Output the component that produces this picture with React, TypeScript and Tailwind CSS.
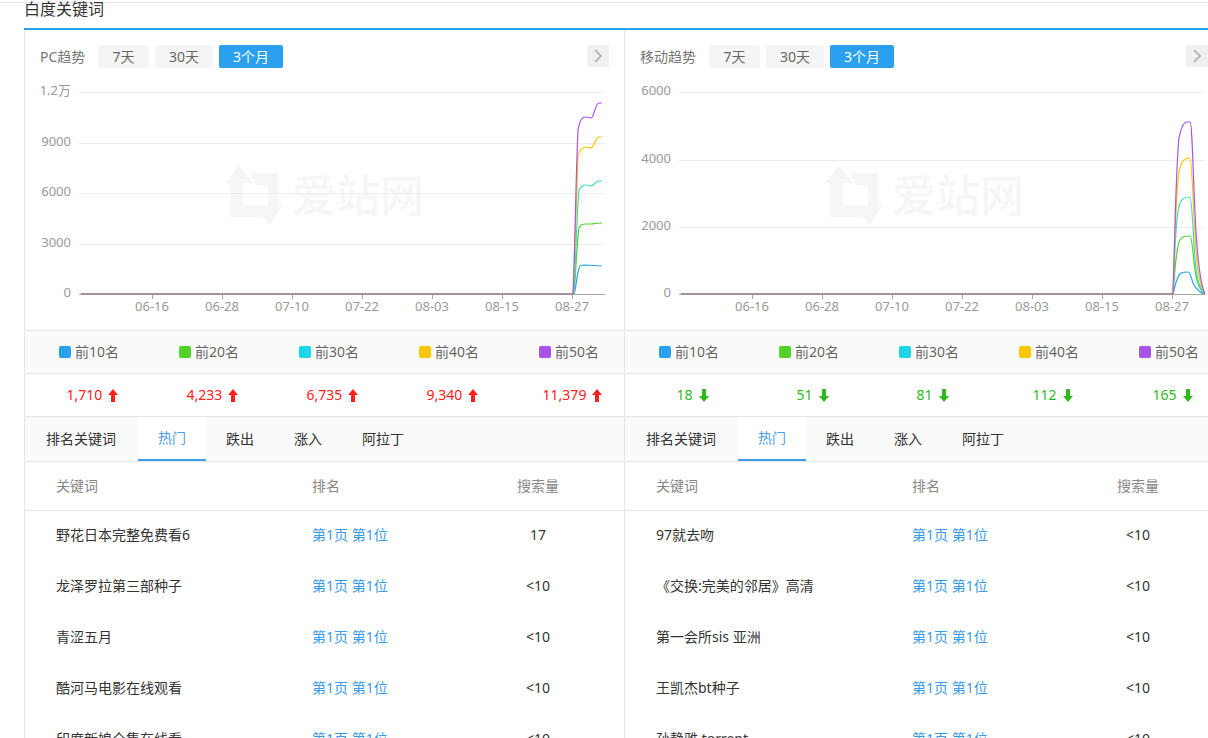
const legendColors = ["#2ba0ec", "#52d12c", "#1fd6e8", "#fcc600", "#a953e8"];
const lineColors = ["#2ba0ec", "#52d12c", "#36dccb", "#fcc600", "#a953e8"];
const ticks = [
  { x: 152, label: "06-16" },
  { x: 222, label: "06-28" },
  { x: 292, label: "07-10" },
  { x: 362, label: "07-22" },
  { x: 432, label: "08-03" },
  { x: 502, label: "08-15" },
  { x: 572, label: "08-27" },
];
const tabs = ["排名关键词", "热门", "跌出", "涨入", "阿拉丁"];

const pcLines = [
  "M81 294 L574 294 C576 290 577 270 580 266 C581 265 583 265 586 265 L602 266",
  "M81 294 L574 294 C576 270 577 240 579 228 C581 224 583 224 586 224 L591 224 C594 224 595 223 602 223",
  "M81 294 L574 294 C576 250 577 210 579 190 C581 186 583 185 586 185 C589 185 590 186 591 186 C594 186 595 181 599 181 L602 181",
  "M81 294 L573 294 C575 250 577 190 578 155 C580 150 583 147 586 147 C589 147 590 148 591 148 C594 148 595 137 599 137 L602 137",
  "M81 294 L573 294 C575 250 576 170 578 130 C580 118 583 117 586 117 C589 117 590 118 591 118 C594 118 595 103 599 103 L602 103",
];
const mobileLines = [
  "M81 294 L573 294 C575 288 576 276 581 273 C583 272 586 272 588 272 C591 272 591 280 594 285 C597 291 600 291 603 294",
  "M81 294 L573 294 C575 270 576 246 580 240 C582 236 585 236 590 236 C592 236 593 255 595 270 C597 285 600 289 604 294",
  "M81 294 L573 294 C575 250 576 212 580 203 C582 198 585 197 590 197 C592 197 593 235 595 258 C597 282 600 288 604 294",
  "M81 294 L573 294 C575 240 576 180 580 168 C582 160 585 158 590 158 C592 158 593 210 596 250 C598 278 601 287 605 294",
  "M81 294 L573 294 C575 230 576 165 579 138 C581 128 584 122 587 122 L590 122 C592 122 593 170 595 213 C597 255 600 284 605 294",
];

const pcRows = [
  ["野花日本完整免费看6", "17"],
  ["龙泽罗拉第三部种子", "<10"],
  ["青涩五月", "<10"],
  ["酷河马电影在线观看", "<10"],
  ["印度新娘全集在线看", "<10"],
];
const mobileRows = [
  ["97就去吻", "<10"],
  ["《交换:完美的邻居》高清", "<10"],
  ["第一会所sis 亚洲", "<10"],
  ["王凯杰bt种子", "<10"],
  ["孙静雅 torrent", "<10"],
];

function Chart({ yLabels, ys, lines }: { yLabels: string[]; ys: number[]; lines: string[] }) {
  return (
    <svg width="599" height="262" viewBox="25 68 599 262" className="block overflow-visible">
      {/* 水印 */}
      <path d="M239 165 L253 183 L243 183 L243 205 L258 205 L262 217 L230 217 L230 183 L225 183 Z" fill="#f6f6f6" />
      <path d="M251 173 L278 173 L278 206 L283 206 L269 225 L255 206 L268 206 L268 185 L255 185 Z" fill="#f6f6f6" />
      <text x="292" y="212" fontSize="44" fill="#f6f6f6" fontWeight="500">
        爱站网
      </text>
      {ys.slice(0, -1).map((y) => (
        <line key={y} x1="79" x2="605" y1={y + 0.5} y2={y + 0.5} stroke="#ececec" />
      ))}
      <line x1="79" x2="605" y1="294.5" y2="294.5" stroke="#a8a8a8" />
      {ticks.map((t) => (
        <g key={t.x}>
          <line x1={t.x + 0.5} x2={t.x + 0.5} y1="294" y2="299" stroke="#a8a8a8" />
          <text x={t.x} y="311" fontSize="13" fill="#999" textAnchor="middle">
            {t.label}
          </text>
        </g>
      ))}
      {yLabels.map((l, i) => (
        <text key={l} x="71" y={ys[i] + 3} fontSize="13" fill="#999" textAnchor="end">
          {l}
        </text>
      ))}
      {lines.map((d, i) => (
        <path key={i} d={d} fill="none" stroke={lineColors[i]} strokeWidth="1.2" />
      ))}
    </svg>
  );
}

function Arrow({ up, color }: { up: boolean; color: string }) {
  return (
    <svg width="10" height="13" viewBox="0 0 10 13" className="ml-1.5 shrink-0">
      <path
        d={up ? "M5 0 L10 6 L7 6 L7 13 L3 13 L3 6 L0 6 Z" : "M3 0 L7 0 L7 7 L10 7 L5 13 L0 7 L3 7 Z"}
        fill={color}
      />
    </svg>
  );
}

function Panel({
  label,
  labelClass,
  barClass,
  yLabels,
  ys,
  lines,
  values,
  up,
  rows,
}: {
  label: string;
  labelClass: string;
  barClass: string;
  yLabels: string[];
  ys: number[];
  lines: string[];
  values: string[];
  up: boolean;
  rows: string[][];
}) {
  const valueColor = up ? "#ff2020" : "#2fb81c";
  return (
    <div className="w-[600px] shrink-0 border-l border-[#e5e5e5]">
      <div className={barClass}>
        <span className={labelClass}>{label}</span>
        <button className="h-[23px] w-[51px] rounded-[2px] bg-[#f5f5f5] text-[#666] leading-[23px]">7天</button>
        <button className="ml-1.5 h-[23px] w-[58px] rounded-[2px] bg-[#f5f5f5] text-[#666] leading-[23px]">30天</button>
        <button className="ml-1.5 h-[23px] w-[64px] rounded-[2px] bg-[#2ba0ec] text-white leading-[23px]">3个月</button>
        <div className="ml-auto flex h-[22px] w-[22px] items-center justify-center bg-[#f0f0f0]">
          <svg width="10" height="14" viewBox="0 0 10 14">
            <path d="M2 1 L8 7 L2 13" fill="none" stroke="#aaa" strokeWidth="1.5" />
          </svg>
        </div>
      </div>
      <Chart yLabels={yLabels} ys={ys} lines={lines} />
      <div className="grid h-[44px] grid-cols-[repeat(5,120px)] border-y border-[#e5e5e5] bg-[#fafafa]">
        {legendColors.map((c, i) => (
          <div key={c} className="flex items-center pl-[34px] text-[#666]">
            <span className="h-3 w-3 shrink-0 rounded-[2px]" style={{ backgroundColor: c }} />
            <span className="ml-1 whitespace-nowrap">前{(i + 1) * 10}名</span>
          </div>
        ))}
      </div>
      <div className="grid h-[43px] grid-cols-[repeat(5,120px)] border-b border-[#e5e5e5]">
        {values.map((v) => (
          <div key={v} className="flex items-center justify-center pl-[15px]" style={{ color: valueColor }}>
            {v}
            <Arrow up={up} color={valueColor} />
          </div>
        ))}
      </div>
      <div className="flex h-[45px] border-b border-[#e5e5e5] bg-[#fafafa] pl-[1px]">
        {tabs.map((t, i) => (
          <div
            key={t}
            className={
              i === 1
                ? "flex h-[44px] items-center border-b-2 border-[#3f9fe8] bg-white px-5 text-[#4a9fe8]"
                : i === 0
                  ? "flex h-[44px] items-center pl-5 pr-[22px] text-[#333]"
                  : "flex h-[44px] items-center px-5 text-[#333]"
            }
          >
            {t}
          </div>
        ))}
      </div>
      <div className="grid h-[49px] grid-cols-[287px_176px_100px] items-center border-b border-[#e5e5e5] text-[#888]">
        <div className="pl-[31px]">关键词</div>
        <div>排名</div>
        <div className="text-center">搜索量</div>
      </div>
      {rows.map((r) => (
        <div key={r[0]} className="grid h-[51px] grid-cols-[287px_176px_100px] items-center pb-1 text-[#333]">
          <div className="pl-[31px] whitespace-nowrap">{r[0]}</div>
          <div className="text-[#3a9be8]">第1页 第1位</div>
          <div className="text-center">{r[1]}</div>
        </div>
      ))}
    </div>
  );
}

export default function App() {
  return (
    <div className="h-[738px] w-[1208px] overflow-hidden bg-white font-['Noto_Sans','Noto_Sans_CJK_SC',sans-serif] text-sm">
      <div className="mt-[2px] h-[26px] border-t border-[#e5e5e5] pl-6 text-base text-[#333]">
        <div className="-mt-[2px] leading-[16px]">白度关键词</div>
      </div>
      <div className="ml-6 w-[1200px] border-t-2 border-[#2ba0ec]">
        <div className="flex">
          <Panel
            label="PC趋势"
            labelClass="w-[58px] shrink-0 text-[#777] leading-[23px]"
            barClass="flex h-[38px] items-start pt-[15px] pl-[15px] pr-[15px]"
            yLabels={["1.2万", "9000", "6000", "3000", "0"]}
            ys={[92, 143, 193, 244, 294]}
            lines={pcLines}
            values={["1,710", "4,233", "6,735", "9,340", "11,379"]}
            up
            rows={pcRows}
          />
          <Panel
            label="移动趋势"
            labelClass="w-[69px] shrink-0 text-[#777] leading-[23px]"
            barClass="flex h-[38px] items-start pt-[15px] pl-[15px] pr-4"
            yLabels={["6000", "4000", "2000", "0"]}
            ys={[92, 160, 227, 294]}
            lines={mobileLines}
            values={["18", "51", "81", "112", "165"]}
            up={false}
            rows={mobileRows}
          />
        </div>
      </div>
    </div>
  );
}
